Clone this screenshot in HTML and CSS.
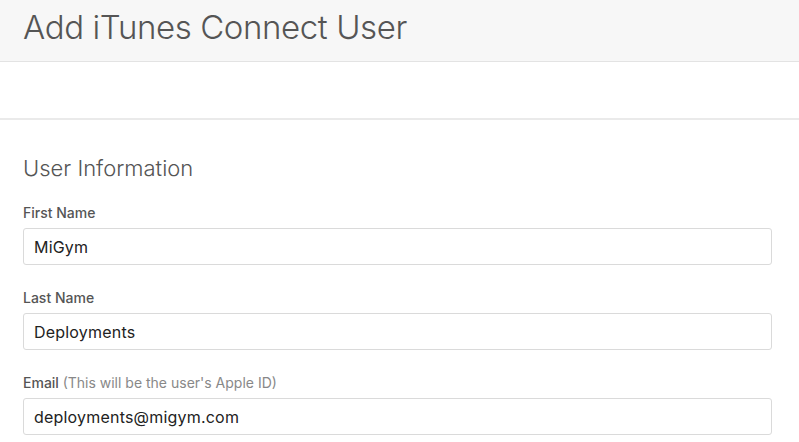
FILE: index.html
```html
<!DOCTYPE html>
<html>
<head>
<meta charset="utf-8">
<link rel="stylesheet" href="styles.css">
</head>
<body>
<header class="page-header">
  <h1 class="page-title">Add iTunes Connect User</h1>
</header>
<div class="toolbar"></div>
<main class="content">
  <h2 class="section-title">User Information</h2>
  <div class="field">
    <label class="field-label">First Name</label>
    <div class="input">MiGym</div>
  </div>
  <div class="field">
    <label class="field-label">Last Name</label>
    <div class="input">Deployments</div>
  </div>
  <div class="field">
    <label class="field-label">Email <span class="hint">(This will be the user's Apple ID)</span></label>
    <div class="input">deployments@migym.com</div>
  </div>
</main>
</body>
</html>
```
FILE: styles.css
```css
html, body {
  margin: 0;
  padding: 0;
  background: #ffffff;
  font-family: "Inter", "Liberation Sans", sans-serif;
  color: #333;
  overflow: hidden;
}
.page-header {
  height: 62px;
  background: #f7f7f7;
  border-bottom: 1px solid #e3e3e3;
  box-sizing: border-box;
  padding: 0 23px;
  display: flex;
  align-items: center;
}
.page-title {
  margin: 0;
  font-size: 33px;
  font-weight: 300;
  color: #555;
  letter-spacing: -0.4px;
  position: relative;
  top: -4px;
}
.toolbar {
  height: 58px;
  border-bottom: 2px solid #eaeaea;
  box-sizing: border-box;
}
.content {
  padding: 34px 27px 0 23px;
}
.section-title {
  margin: 0 0 22px;
  font-size: 22px;
  font-weight: 300;
  color: #555;
  line-height: 28px;
}
.field {
  display: flex;
  flex-direction: column;
  margin-bottom: 24px;
}
.field-label {
  font-size: 14px;
  font-weight: 500;
  color: #555;
  line-height: 17px;
  margin-bottom: 7px;
}
.hint {
  font-weight: 400;
  color: #888;
}
.input {
  height: 37px;
  box-sizing: border-box;
  border: 1px solid #dadada;
  border-radius: 3px;
  padding: 0 10px;
  display: flex;
  align-items: center;
  font-size: 16px;
  letter-spacing: 0.2px;
  color: #222;
}
```
